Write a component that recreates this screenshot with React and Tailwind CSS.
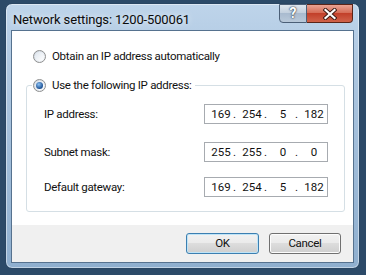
import React from "react";

const font = "font-['Roboto','Liberation_Sans',Arial,sans-serif]";
const body = "text-[11.5px] leading-[15px] tracking-[-0.3px] text-[#111]";

const Radio = ({ checked }) => (
  <span className="flex h-[13px] w-[13px] shrink-0 items-center justify-center rounded-full border border-[#8e8f8f] bg-[linear-gradient(135deg,#cfd8e2,#f6f8fa)]">
    <span className="flex h-[9px] w-[9px] items-center justify-center rounded-full bg-[linear-gradient(135deg,#dfe6ee,#ffffff)]">
      {checked && (
        <span className="h-[7px] w-[7px] rounded-full bg-[radial-gradient(circle_at_40%_35%,#8cc2f5,#1a4f92_70%)]" />
      )}
    </span>
  </span>
);

const IpBox = ({ parts }) => (
  <div className="flex h-[20px] w-[124px] items-center border border-[#a7abb0] bg-white pl-[4px] text-[11.5px] leading-[15px] text-[#111]">
    {parts.map((p, i) => (
      <React.Fragment key={i}>
        <span className="w-[24px] text-center">{p}</span>
        {i < 3 && <span className="w-[7px] text-left">.</span>}
      </React.Fragment>
    ))}
  </div>
);

const Row = ({ label, parts, className }) => (
  <div className={`flex items-center justify-between ${className}`}>
    <span className={body}>{label}</span>
    <IpBox parts={parts} />
  </div>
);

export default function App() {
  return (
    <div className={`${font} h-[275px] w-[366px] overflow-hidden bg-[#2c4a68] pl-[5px] pr-[6px] pt-[3px]`}>
      <div className="flex h-[266px] w-[355px] flex-col rounded-[7px] border border-[#2a4663] bg-[linear-gradient(180deg,#bed4ea_0%,#abc5df_30%,#8fafcf_100%)] px-[5px] pb-[5px] shadow-[inset_0_0_0_1px_rgba(255,255,255,0.45)]">
        {/* title bar */}
        <div className="flex h-[26px] items-start justify-between">
          <span className="pl-[2px] pt-[8px] text-[13px] leading-[15px] tracking-[-0.15px] text-[#0b0b0b] [text-shadow:0_0_6px_rgba(255,255,255,0.9)]">
            Network settings: 1200-500061
          </span>
          <div className="mr-[1px] flex">
            <div className="flex h-[19px] w-[28px] items-center justify-center rounded-bl-[4px] border border-[#4b5f77] bg-[linear-gradient(180deg,#dfe7ef_0%,#c3d0de_45%,#a9bbcf_50%,#b9c9da_100%)] text-[14px] font-bold leading-[15px] text-white [text-shadow:0_0_1px_#253244,0_0_2px_#253244]">
              ?
            </div>
            <div className="flex h-[19px] w-[46px] items-center justify-center rounded-br-[4px] border border-l-0 border-[#5a2418] bg-[linear-gradient(180deg,#e9a393_0%,#d66e58_45%,#c2402a_50%,#d0624a_100%)]">
              <svg width="14" height="12" viewBox="0 0 14 12">
                <path d="M2.5 2 L11.5 10 M11.5 2 L2.5 10" stroke="#3a1a14" strokeWidth="4" strokeLinecap="square" />
                <path d="M2.5 2 L11.5 10 M11.5 2 L2.5 10" stroke="#ffffff" strokeWidth="2.2" strokeLinecap="square" />
              </svg>
            </div>
          </div>
        </div>

        {/* client area */}
        <div className="flex flex-1 flex-col border border-[#56728f] bg-white">
          <div className="flex h-[194px] flex-col">
            <label className={`ml-[21px] mt-[18px] flex items-center gap-[6px] ${body}`}>
              <Radio />
              Obtain an IP address automatically
            </label>

            <fieldset className="ml-[14px] mr-[8px] mt-[14px] rounded-[3px] border border-[#d5dfe5] pb-[14px] pl-[17px] pr-[16px]">
              <legend className={`-ml-[12px] flex items-center gap-[6px] px-[1px] ${body}`}>
                <Radio checked />
                <span className="pr-[2px]">Use the following IP address:</span>
              </legend>
              <Row label="IP address:" parts={["169", "254", "5", "182"]} className="mt-[11px]" />
              <Row label="Subnet mask:" parts={["255", "255", "0", "0"]} className="mt-[18px]" />
              <Row label="Default gateway:" parts={["169", "254", "5", "182"]} className="mt-[15px]" />
            </fieldset>
          </div>

          <div className="flex flex-1 justify-end gap-[10px] bg-[#f0f0f0] pr-[12px] pt-[8px]">
            <button className={`h-[21px] w-[73px] rounded-[3px] border border-[#3c7fb1] bg-[linear-gradient(180deg,#f2f2f2_0%,#ebebeb_45%,#dddddd_50%,#cfcfcf_100%)] shadow-[inset_0_0_0_1px_#bfe4f7] ${body}`}>
              OK
            </button>
            <button className={`h-[21px] w-[72px] rounded-[3px] border border-[#707070] bg-[linear-gradient(180deg,#f2f2f2_0%,#ebebeb_45%,#dddddd_50%,#cfcfcf_100%)] shadow-[inset_0_0_0_1px_#fcfcfc] ${body}`}>
              Cancel
            </button>
          </div>
        </div>
      </div>
    </div>
  );
}
